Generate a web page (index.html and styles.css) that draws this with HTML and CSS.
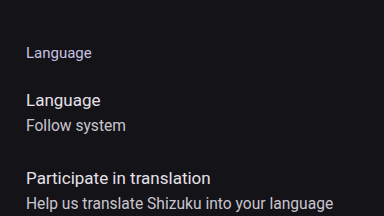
FILE: index.html
```html
<!DOCTYPE html>
<html lang="en">
<head>
    <meta charset="UTF-8">
    <meta name="viewport" content="width=device-width, initial-scale=1.0">
    <title>Settings</title>
    <link rel="stylesheet" href="styles.css">
</head>
<body>
    <div class="settings">
        <div class="category">Language</div>
        <div class="item">
            <div class="item-title">Language</div>
            <div class="item-summary">Follow system</div>
        </div>
        <div class="item">
            <div class="item-title">Participate in translation</div>
            <div class="item-summary">Help us translate Shizuku into your language</div>
        </div>
    </div>
</body>
</html>
```

FILE: styles.css
```css
body {
    margin: 0;
    background-color: #141318;
    font-family: Roboto, "Liberation Sans", sans-serif;
    height: 100vh;
    overflow: hidden;
}
.settings {
    padding-top: 43px;
}
.category {
    padding: 0 26px;
    font-size: 15px;
    line-height: 20px;
    color: #c6c1e1;
}
.item {
    padding: 0 26px;
    margin-top: 22.5px;
}
.item + .item {
    margin-top: 26.7px;
}
.item-title {
    font-size: 17px;
    line-height: 28px;
    color: #e6e1e8;
}
.item-summary {
    font-size: 15.6px;
    line-height: 24px;
    color: #c9c5cf;
}
```
